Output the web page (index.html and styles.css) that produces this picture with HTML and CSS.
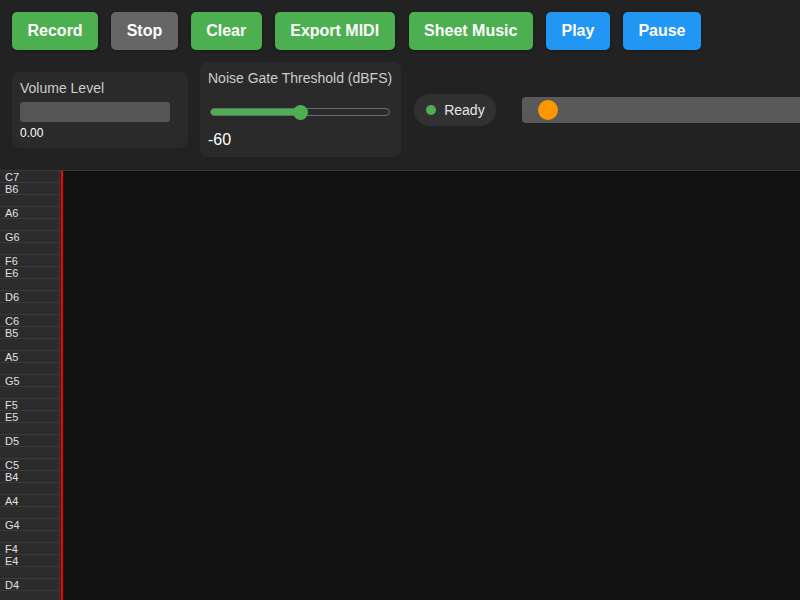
FILE: index.html
```html
<!DOCTYPE html>
<html lang="en">
<head>
<meta charset="utf-8">
<title>Pitch Recorder</title>
<link rel="stylesheet" href="styles.css">
</head>
<body>
<header class="header">
  <div class="btn-row">
    <button class="btn green">Record</button>
    <button class="btn gray">Stop</button>
    <button class="btn green">Clear</button>
    <button class="btn green">Export MIDI</button>
    <button class="btn green sheet">Sheet Music</button>
    <button class="btn blue">Play</button>
    <button class="btn blue">Pause</button>
  </div>
  <div class="ctrl-row">
    <div class="panel volume">
      <div class="label">Volume Level</div>
      <div class="meter"></div>
      <div class="small">0.00</div>
    </div>
    <div class="panel gate">
      <div class="label">Noise Gate Threshold (dBFS)</div>
      <div class="range">
        <div class="track"><div class="fill" style="width:50%"></div></div>
        <div class="thumb" style="left:50%"></div>
      </div>
      <div class="value">-60</div>
    </div>
    <div class="status"><span class="dot"></span>Ready</div>
    <div class="seek"><span class="knob"></span></div>
  </div>
</header>
<main class="roll">
  <div class="keys">
    <div class="key">C7</div><div class="key">B6</div><div class="key"></div><div class="key">A6</div><div class="key"></div><div class="key">G6</div><div class="key"></div><div class="key">F6</div><div class="key">E6</div><div class="key"></div><div class="key">D6</div><div class="key"></div>
    <div class="key">C6</div><div class="key">B5</div><div class="key"></div><div class="key">A5</div><div class="key"></div><div class="key">G5</div><div class="key"></div><div class="key">F5</div><div class="key">E5</div><div class="key"></div><div class="key">D5</div><div class="key"></div>
    <div class="key">C5</div><div class="key">B4</div><div class="key"></div><div class="key">A4</div><div class="key"></div><div class="key">G4</div><div class="key"></div><div class="key">F4</div><div class="key">E4</div><div class="key"></div><div class="key">D4</div><div class="key"></div>
  </div>
  <div class="canvas"><div class="playhead"></div></div>
</main>
</body>
</html>
```
FILE: styles.css
```css
* { box-sizing: border-box; }
html, body { margin: 0; height: 100%; overflow: hidden; }
body {
  background: #111111;
  font-family: "Liberation Sans", Arial, sans-serif;
  color: #eeeeee;
  display: flex;
  flex-direction: column;
}
.header {
  background: #222222;
  padding: 12px 12px 12px;
  border-bottom: 1px solid #383838;
  height: 171px;
  display: flex;
  flex-direction: column;
  gap: 12px;
  flex: none;
}
.btn-row { display: flex; gap: 13px; }
.btn {
  border: 0;
  border-radius: 5px;
  color: #fff;
  font-family: "Liberation Sans", Arial, sans-serif;
  font-weight: bold;
  font-size: 16px;
  line-height: 18px;
  padding: 10px 15.5px;
  box-shadow: 0 1px 3px rgba(0,0,0,0.3);
}
.btn.green { background: #4caf50; }
.btn.gray { background: #666666; }
.btn.blue { background: #2196f3; }
.btn.sheet { margin-left: 1px; }
.ctrl-row {
  display: flex;
  align-items: center;
  gap: 12px;
  white-space: nowrap;
}
.panel {
  background: #2a2a2a;
  border-radius: 8px;
  padding: 8px;
}
.volume { width: 176px; flex: none; }
.label { font-size: 14px; line-height: 16px; color: #cccccc; }
.meter {
  width: 150px;
  height: 20px;
  margin-top: 6px;
  background: #555555;
  border-radius: 3px;
}
.small { font-size: 12px; line-height: 14px; margin-top: 4px; color: #ffffff; }
.gate { flex: none; padding-right: 9px; }
.range {
  position: relative;
  height: 16px;
  margin: 18px 2px 11px;
}
.track {
  position: absolute;
  left: 0; right: 0; top: 4px;
  height: 8px;
  border-radius: 4px;
  border: 1px solid #6a6a6a;
  background: #2c2c2c;
  overflow: hidden;
}
.fill { height: 100%; background: #4caf50; }
.thumb {
  position: absolute;
  top: 0.5px;
  width: 15px;
  height: 15px;
  margin-left: -7px;
  border-radius: 50%;
  background: #4caf50;
}
.value { font-size: 16px; line-height: 18px; color: #ffffff; }
.status {
  flex: none;
  margin-left: 1px;
  display: flex;
  align-items: center;
  gap: 8px;
  height: 32px;
  padding: 0 11px 0 12px;
  border-radius: 16px;
  background: #313131;
  font-size: 14px;
  color: #e6e6e6;
}
.dot { width: 10px; height: 10px; border-radius: 50%; background: #4caf50; }
.seek {
  flex: none;
  margin-left: 14px;
  width: 320px;
  height: 26px;
  background: #595959;
  border-radius: 4px;
  display: flex;
  align-items: center;
  padding-left: 16px;
}
.knob { width: 20px; height: 20px; border-radius: 50%; background: #ff9800; }
.roll { flex: 1; display: flex; overflow: hidden; }
.keys {
  width: 61px;
  flex: none;
  background: #222222;
  border-right: 1px solid #222222;
}
.key {
  height: 12px;
  width: 60px;
  background: #2b2b2b;
  border-bottom: 1px solid #3a3a3a;
  border-right: 1px solid #3a3a3a;
  font-size: 11px;
  line-height: 12px;
  padding-left: 5px;
  color: #e0e0e0;
}
.canvas { flex: 1; position: relative; background: #111111; }
.playhead { position: absolute; left: 0; top: 0; bottom: 0; width: 2px; background: #ff0000; }
```
